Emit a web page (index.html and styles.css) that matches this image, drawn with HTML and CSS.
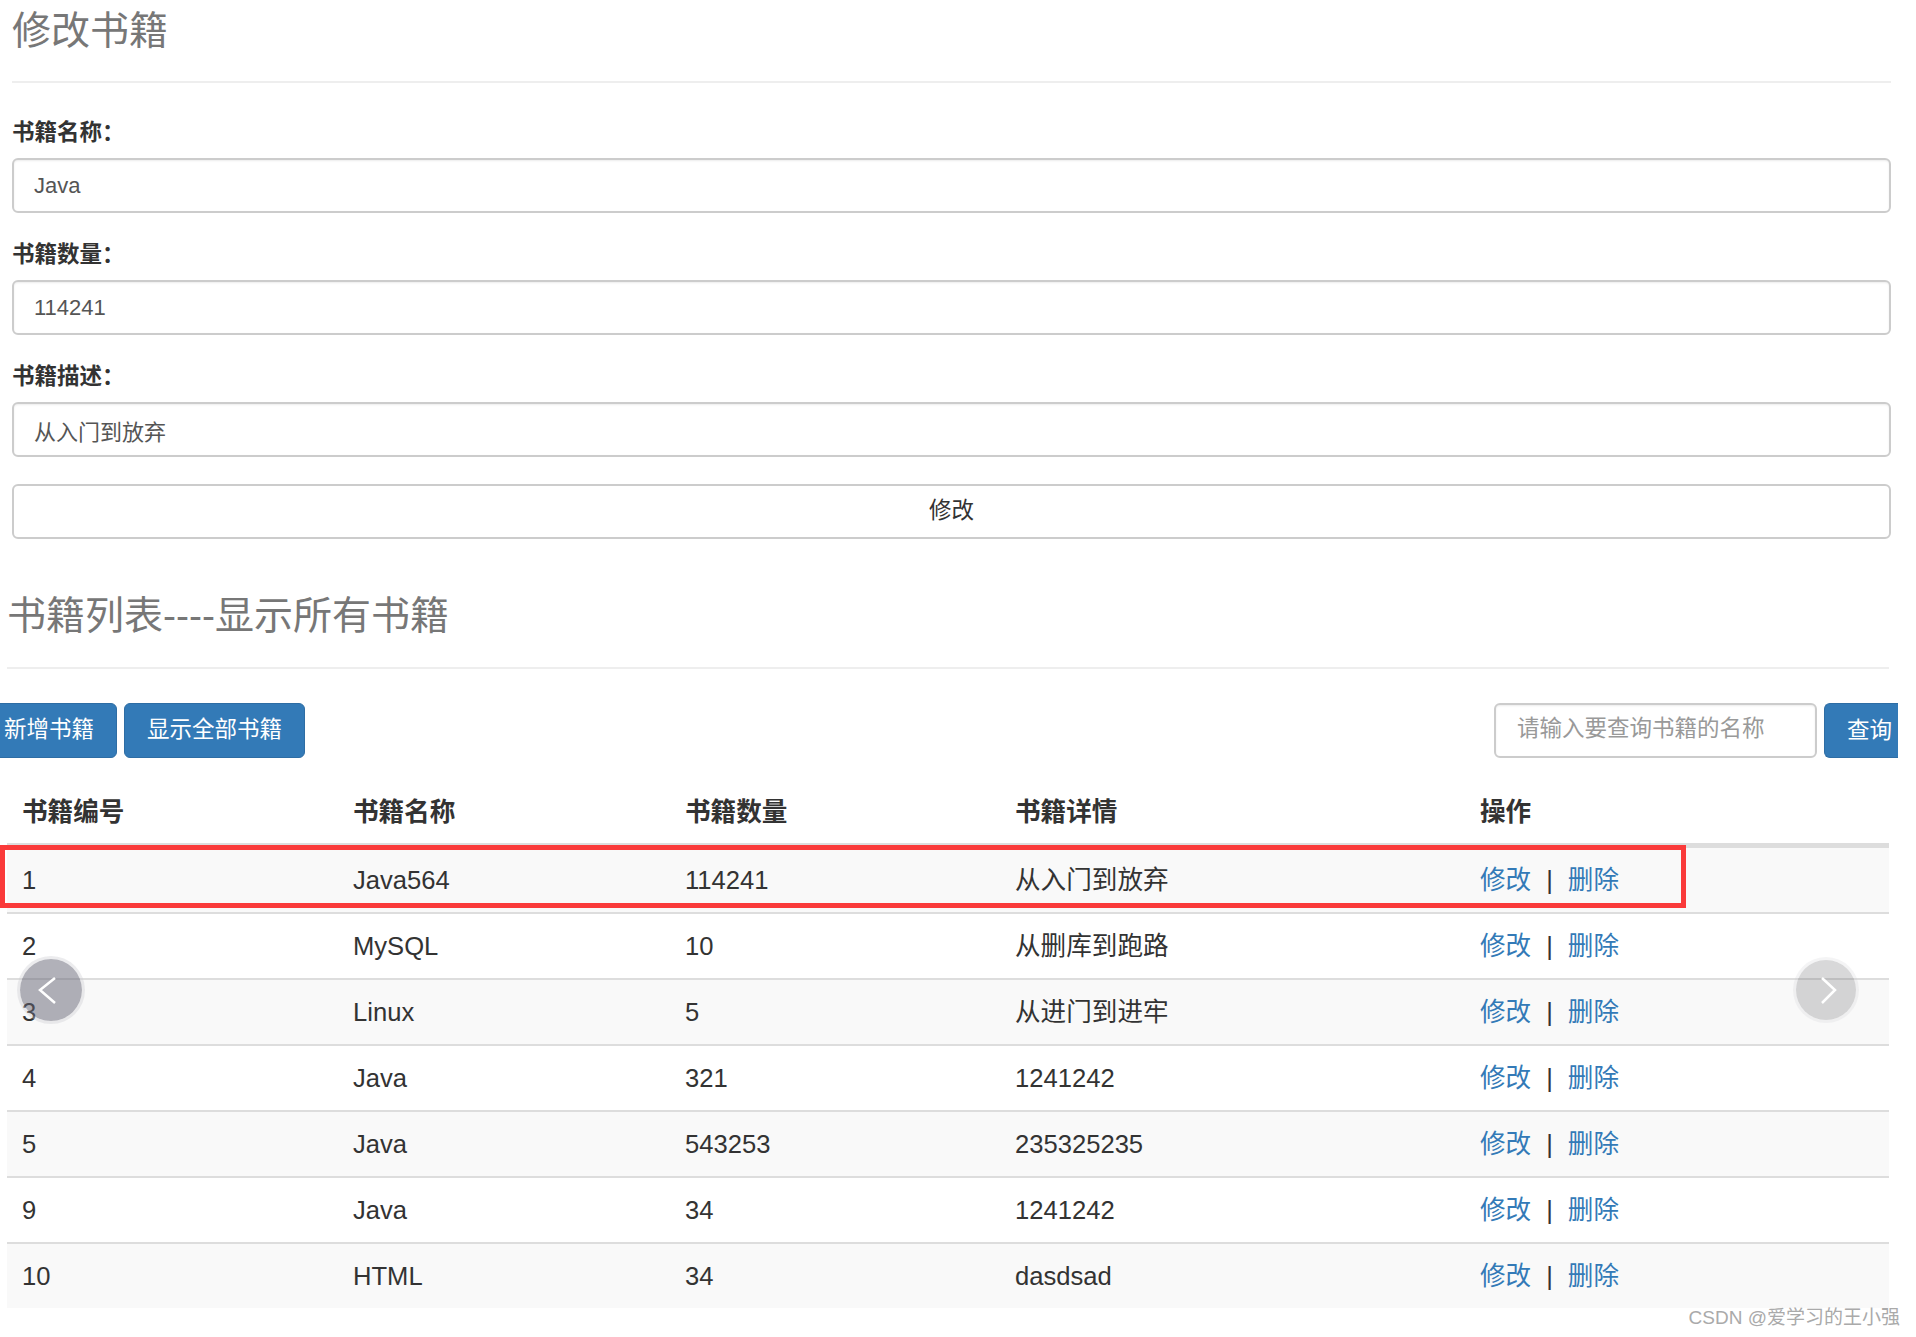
FILE: index.html
```html
<!DOCTYPE html>
<html lang="zh-CN">
<head>
<meta charset="utf-8">
<title>修改书籍</title>
<link rel="stylesheet" href="styles.css">
</head>
<body>
<div class="edit">
  <div class="page-header"><h1>修改书籍</h1></div>
  <form class="edit-form">
    <div class="form-group">
      <label>书籍名称：</label>
      <input class="form-control" type="text" value="Java">
    </div>
    <div class="form-group">
      <label>书籍数量：</label>
      <input class="form-control" type="text" value="114241">
    </div>
    <div class="form-group">
      <label>书籍描述：</label>
      <input class="form-control" type="text" value="从入门到放弃">
    </div>
    <div class="form-group">
      <button type="button" class="form-control btn-submit">修改</button>
    </div>
  </form>
</div>

<div class="list">
  <div class="page-header"><h1>书籍列表----显示所有书籍</h1></div>
  <div class="toolbar">
    <div class="actions">
      <a class="btn">新增书籍</a>
      <a class="btn">显示全部书籍</a>
    </div>
    <form class="search">
      <input class="search-input" type="text" placeholder="请输入要查询书籍的名称">
      <button type="button" class="btn btn-query">查询</button>
    </form>
  </div>
  <div class="table-wrap">
    <table class="books">
      <colgroup>
        <col class="c1"><col class="c2"><col class="c3"><col class="c4"><col class="c5">
      </colgroup>
      <thead>
        <tr><th>书籍编号</th><th>书籍名称</th><th>书籍数量</th><th>书籍详情</th><th>操作</th></tr>
      </thead>
      <tbody>
        <tr><td>1</td><td>Java564</td><td>114241</td><td>从入门到放弃</td><td><a>修改</a><span class="sep">|</span><a>删除</a></td></tr>
        <tr><td>2</td><td>MySQL</td><td>10</td><td>从删库到跑路</td><td><a>修改</a><span class="sep">|</span><a>删除</a></td></tr>
        <tr><td>3</td><td>Linux</td><td>5</td><td>从进门到进牢</td><td><a>修改</a><span class="sep">|</span><a>删除</a></td></tr>
        <tr><td>4</td><td>Java</td><td>321</td><td>1241242</td><td><a>修改</a><span class="sep">|</span><a>删除</a></td></tr>
        <tr><td>5</td><td>Java</td><td>543253</td><td>235325235</td><td><a>修改</a><span class="sep">|</span><a>删除</a></td></tr>
        <tr><td>9</td><td>Java</td><td>34</td><td>1241242</td><td><a>修改</a><span class="sep">|</span><a>删除</a></td></tr>
        <tr><td>10</td><td>HTML</td><td>34</td><td>dasdsad</td><td><a>修改</a><span class="sep">|</span><a>删除</a></td></tr>
      </tbody>
    </table>
    <div class="highlight"></div>
  </div>
</div>

<div class="slide-btn slide-prev">
  <svg width="68" height="68" viewBox="0 0 68 68"><polyline points="38,22 23,34 38,47" fill="none" stroke="#fff" stroke-width="2.5"/></svg>
</div>
<div class="slide-btn slide-next">
  <svg width="66" height="66" viewBox="0 0 66 66"><polyline points="29,21 42,33 29,46" fill="none" stroke="#fff" stroke-width="2.5"/></svg>
</div>
<div class="watermark">CSDN @爱学习的王小强</div>
</body>
</html>
```

FILE: styles.css
```css
html, body {
  margin: 0;
  padding: 0;
  background: #fff;
}
body {
  position: relative;
  min-height: 1337px;
  overflow: hidden;
  font-family: "Liberation Sans", "Noto Sans CJK SC", sans-serif;
  color: #333;
}

.edit {
  margin: 0 25px 0 12px;
  padding-top: 8px;
}
.page-header h1 {
  margin: 0;
  font-size: 39px;
  line-height: 46px;
  font-weight: normal;
  color: #777;
  padding-bottom: 27px;
  border-bottom: 2px solid #eee;
}
.list .page-header h1 {
  padding-bottom: 28px;
}

.edit-form {
  margin-top: 35px;
}
.form-group {
  margin-bottom: 27px;
}
.form-group:last-child {
  margin-bottom: 0;
}
.form-group label {
  display: block;
  font-size: 22.5px;
  line-height: 30px;
  font-weight: bold;
  margin-bottom: 10px;
  color: #333;
}
.form-control {
  display: block;
  box-sizing: border-box;
  width: 100%;
  height: 55px;
  padding: 0 20px;
  font-family: "Liberation Sans", "Noto Sans CJK SC", sans-serif;
  font-size: 22px;
  color: #555;
  background: #fff;
  border: 2px solid #ccc;
  border-radius: 6px;
  box-shadow: inset 0 1px 2px rgba(0,0,0,0.075);
  outline: none;
}
.btn-submit {
  text-align: center;
  font-size: 22.5px;
  color: #333;
  box-shadow: none;
  padding-bottom: 8px;
  cursor: pointer;
}

.list {
  margin: 54px 27px 0 7px;
}
.toolbar {
  display: flex;
  justify-content: space-between;
  align-items: center;
  margin: 34px -9px 0 -26px;
  height: 55px;
}
.actions {
  display: flex;
  gap: 7px;
}
.btn {
  display: block;
  box-sizing: border-box;
  height: 55px;
  line-height: 51px;
  padding: 0 22px;
  font-family: "Liberation Sans", "Noto Sans CJK SC", sans-serif;
  font-size: 22.5px;
  color: #fff;
  background: #337ab7;
  border: 1px solid #2e6da4;
  border-radius: 6px;
  white-space: nowrap;
  cursor: pointer;
}
.search {
  display: flex;
  gap: 7px;
  margin: 0;
}
.search-input {
  box-sizing: border-box;
  width: 323px;
  height: 55px;
  padding: 0 0 4px 21px;
  font-family: "Liberation Sans", "Noto Sans CJK SC", sans-serif;
  font-size: 22.5px;
  color: #555;
  border: 2px solid #ccc;
  border-radius: 6px;
  box-shadow: inset 0 1px 2px rgba(0,0,0,0.075);
  outline: none;
}
.search-input::placeholder {
  color: #999;
}
.btn-query {
  width: 74px;
  overflow: hidden;
  text-align: left;
  border-radius: 6px 0 0 6px;
  border-right: 0;
}

.table-wrap {
  position: relative;
  margin-top: 23px;
}
.books {
  width: 100%;
  table-layout: fixed;
  border-collapse: separate;
  border-spacing: 0;
  font-size: 25.6px;
}
.c1 { width: 331px; }
.c2 { width: 332px; }
.c3 { width: 330px; }
.c4 { width: 465px; }
.c5 { width: auto; }
.books th {
  text-align: left;
  font-weight: bold;
  line-height: 36px;
  padding: 13px 15px;
  border-bottom: 3px solid #ddd;
  white-space: nowrap;
}
.books td {
  line-height: 36px;
  padding: 14px 15px;
  border-top: 2px solid #ddd;
  white-space: nowrap;
}
.books tbody tr:nth-child(odd) td {
  background: #f9f9f9;
}
.books a {
  color: #337ab7;
  text-decoration: none;
}
.sep {
  padding: 0 15px;
  color: #333;
}
.highlight {
  position: absolute;
  left: -7px;
  top: 64px;
  width: 1686px;
  height: 63px;
  box-sizing: border-box;
  border: 5px solid #fa3a3a;
  pointer-events: none;
}

.slide-btn {
  position: absolute;
  border-radius: 50%;
  box-sizing: border-box;
}
.slide-btn svg {
  display: block;
  position: absolute;
  left: -3px;
  top: -3px;
}
.slide-prev {
  left: 17px;
  top: 956px;
  width: 68px;
  height: 68px;
  background: rgba(100,100,115,0.5);
  border: 3px solid rgba(200,200,205,0.35);
  background-clip: padding-box;
}
.slide-next {
  left: 1793px;
  top: 957px;
  width: 66px;
  height: 66px;
  background: rgba(100,100,105,0.25);
  border: 3px solid rgba(200,200,205,0.2);
  background-clip: padding-box;
}
.watermark {
  position: absolute;
  right: 16px;
  top: 1306px;
  font-size: 19px;
  line-height: 24px;
  color: #aaa;
  white-space: nowrap;
}
```
